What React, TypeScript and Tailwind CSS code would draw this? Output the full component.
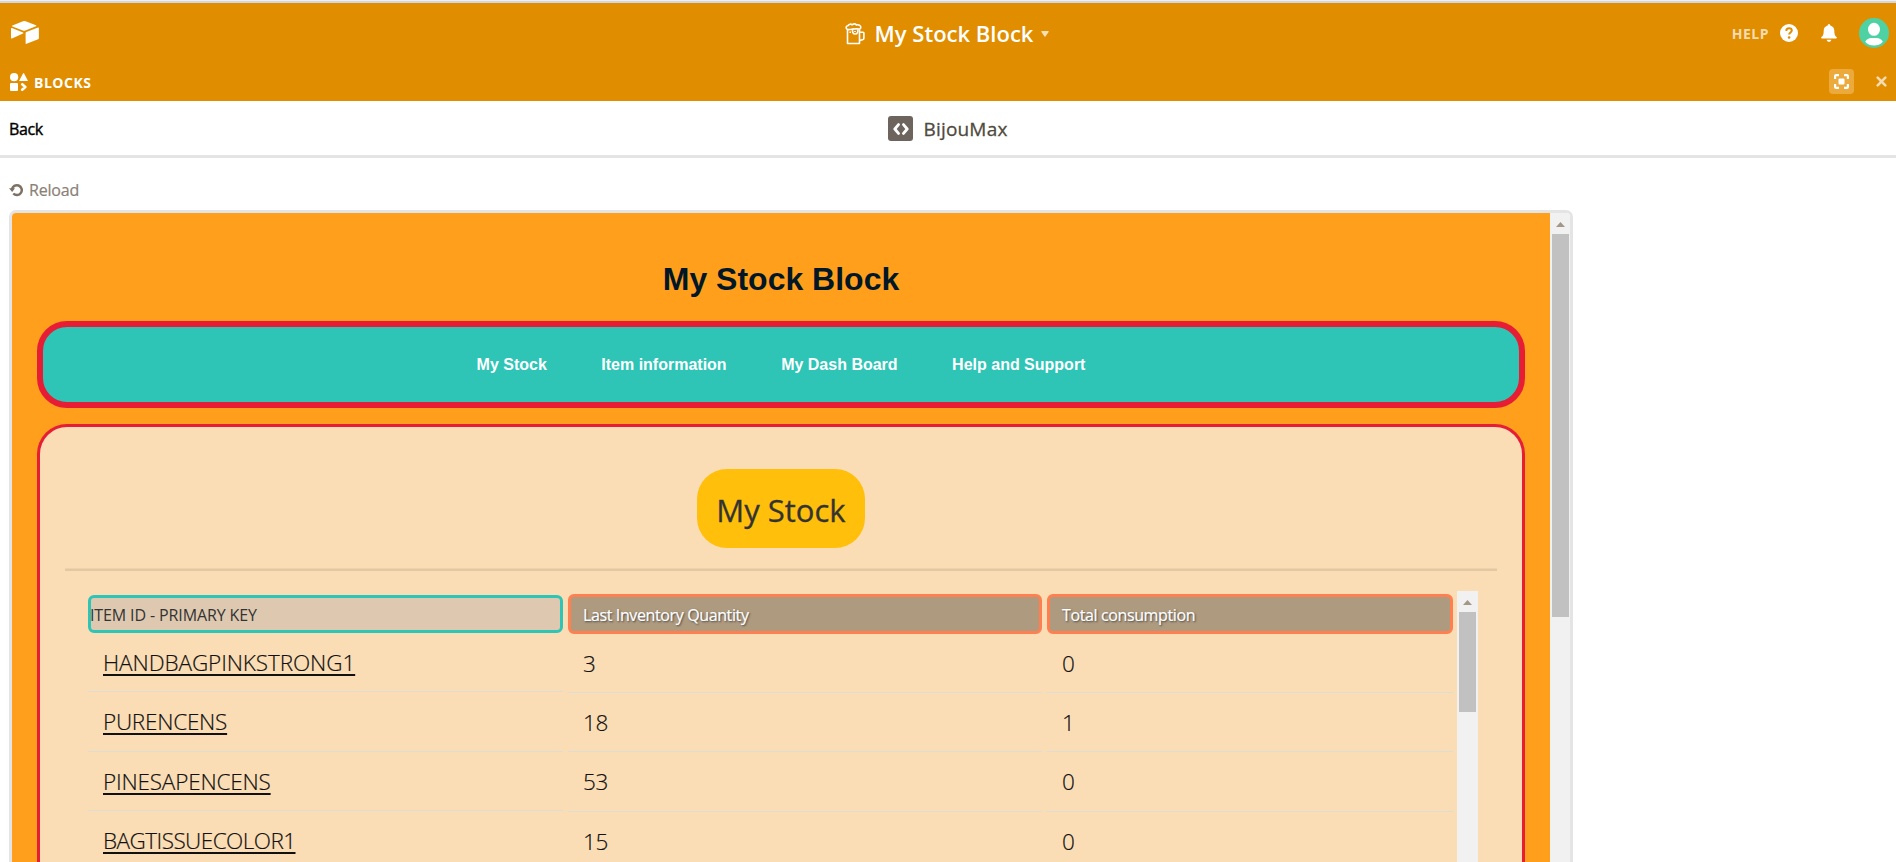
import type { ReactNode } from "react";

const items = [
  { name: "HANDBAGPINKSTRONG1", tracking: "tracking-[-0.09px]" },
  { name: "PURENCENS", tracking: "tracking-[-0.24px]" },
  { name: "PINESAPENCENS", tracking: "tracking-[-0.18px]" },
  { name: "BAGTISSUECOLOR1", tracking: "tracking-[-0.54px]" },
];
const quantities = ["3", "18", "53", "15"];
const consumptions = ["0", "1", "0", "0"];
const links = ["My Stock", "Item information", "My Dash Board", "Help and Support"];

function Logo() {
  return (
    <svg className="h-6 w-[30px]" viewBox="0 0 30 24" fill="#fff">
      <path d="M2.400 5.400 13 1.200q1.300-.5 2.600 0L26 5.300q1 .5 0 1L15.400 10.600q-1.300.5-2.600 0L2.400 6.400q-.9-.5 0-1Z" />
      <path d="M1 8.600q0-1 1-.6l11 4.500q.9.400 0 .9L2 18.400q-1 .4-1-.6Z" />
      <path d="M15.600 13q0-.7.7-1L28 7.500q.9-.3.900.5v10.300q0 .7-.7 1l-11.700 4.500q-.9.300-.9-.5Z" />
    </svg>
  );
}

function BlocksIcon() {
  return (
    <svg className="h-[18px] w-[18px]" viewBox="0 0 18 18" fill="#fff">
      <circle cx="4.1" cy="4.2" r="4.1" />
      <path d="M13.500 0q.4 0 .6.400l3.700 7q.3.700-.4.700H9.700q-.8 0-.4-.7l3.700-7q.2-.4.500-.4Z" />
      <rect x="0" y="10" width="8" height="8" rx="1" />
      <path d="m12.200 11.300 3.100 2.700-3.100 2.700" fill="none" stroke="#fff" strokeWidth="2.600" strokeLinejoin="round" strokeLinecap="round" />
    </svg>
  );
}

function BeerIcon() {
  return (
    <svg className="h-[22px] w-5" viewBox="0 0 20 22" fill="none" stroke="#fff" strokeWidth="1.600" strokeLinejoin="round">
      <path d="M2.500 6.500v14h12v-14" />
      <path d="M2.500 6.500C.6 5.600.6 3 2.800 2.700 4.200.9 6 .8 7.200 1.800 8.600.8 10.400.8 11.400 1.900c2.300-.5 4.400.6 4.400 2.300 0 1.500-1.200 2-2.300 1.700-1.500-.5-2.500.2-4 .1-1.600-.6-4.400 1.300-7 .5Z" />
      <path d="M7.800 6.300c-1 2.300.3 4.700 2.400 4.700s3.200-2.200 2.500-4.800M10 8v1" />
      <path d="M14.800 9.200h3.200q.9 0 .9.900v5.200q0 1.200-1.300 1.500l-2.800.6" />
      <path d="M5.200 8.500v1.500" />
    </svg>
  );
}

function BellIcon() {
  return (
    <svg className="h-[18px] w-4" viewBox="0 0 16 18" fill="#fff">
      <path d="M8 0q1.300 0 1.300 1.500c2.300.6 4 2.400 4 5.200 0 3.400.5 4.800 2.200 6.300.8.800.4 1.600-.5 1.600H1c-.9 0-1.300-.8-.5-1.600 1.700-1.500 2.200-2.900 2.200-6.300 0-2.800 1.700-4.600 4-5.200Q6.700 0 8 0Z" />
      <path d="M5.700 15.800h4.600C10 17.200 9.200 17.800 8 17.800s-2-.6-2.300-2Z" />
    </svg>
  );
}

function Avatar() {
  return (
    <svg className="h-[30px] w-[30px]" viewBox="0 0 30 30">
      <circle cx="15" cy="15" r="15" fill="#4ed2a4" />
      <ellipse cx="15" cy="11.300" rx="6" ry="6.500" fill="#fff" />
      <path d="M6.200 23.800C7.500 21.200 10 20 12 20h6c2 0 4.500 1.200 5.800 3.800C21.500 26.500 18.500 27.600 15 27.600s-6.500-1.100-8.800-3.800Z" fill="#fff" />
    </svg>
  );
}

function FocusIcon() {
  return (
    <svg className="h-[15px] w-[15px]" viewBox="0 0 15 15" fill="none" stroke="#fff" strokeWidth="2.200" strokeLinejoin="round">
      <path d="M1.100 5V2.100q0-1 1-1H5M10 1.100h2.900q1 0 1 1V5M13.900 10v2.900q0 1-1 1H10M5 13.900H2.100q-1 0-1-1V10" />
      <rect x="4.500" y="4.500" width="6" height="6" rx="1" fill="#fff" stroke="none" />
    </svg>
  );
}

function ReloadIcon() {
  return (
    <svg className="h-[14px] w-[14px]" viewBox="0 0 14 14">
      <path d="M3 6.500a4.900 4.900 0 1 1 1.300 4" fill="none" stroke="#7d7163" strokeWidth="2.500" />
      <path d="M0 5.200h6L3.200 9Z" fill="#7d7163" />
    </svg>
  );
}

function UpArrow() {
  return (
    <svg className="h-[5px] w-[9px]" viewBox="0 0 9 5">
      <path d="M4.500 0 9 5H0Z" fill="#a39886" />
    </svg>
  );
}

function Scrollbar({ thumb, width }: { thumb: string; width: string }) {
  return (
    <div className={`${width} flex shrink-0 flex-col items-center self-stretch bg-[#f1f1f1]`}>
      <div className="flex h-[21px] shrink-0 items-center justify-center pt-[2px]">
        <UpArrow />
      </div>
      <div className={`${thumb} w-[17px] shrink-0 bg-[#c1c1c1]`} />
    </div>
  );
}

function Column({ className, title, children }: { className: string; title: string; children: ReactNode }) {
  return (
    <div className={className}>
      <div className="h-10 rounded-md border-3 border-[#ff7f50] bg-[#ae9a7e] pl-3 text-base leading-[37px] font-normal tracking-[-0.38px] text-white [text-shadow:1px_1px_2px_#444]">
        {title}
      </div>
      {children}
    </div>
  );
}

function ValueRows({ values }: { values: string[] }) {
  return (
    <>
      {values.map((v, i) => (
        <div key={i} className="h-[59.200px] border-b border-[#dedcd5] pl-[15px] text-[22.500px] leading-[60px] tracking-[-0.400px]">
          {v}
        </div>
      ))}
    </>
  );
}

export default function App() {
  return (
    <div className="flex h-[862px] w-[1896px] flex-col overflow-hidden bg-white font-['Open_Sans',sans-serif]">
      <div className="h-[3px] shrink-0 border-t border-[#eeeff2] bg-[#d3d6de]" />
      <header className="h-[98px] shrink-0 bg-[#e08d00] text-white">
        <div className="grid h-[60px] grid-cols-3">
          <div className="pt-[17px] pl-[10px]">
            <Logo />
          </div>
          <div className="flex justify-center pr-[2px]">
            <div className="pt-[20px]">
              <BeerIcon />
            </div>
            <div className="ml-[10px] pt-[15px] text-[22px] leading-[31px] font-semibold">My Stock Block</div>
            <svg className="mt-[28px] ml-[8px] h-[6px] w-2" viewBox="0 0 8 6">
              <path d="M.8 0h6.400q.8.200.400 1L4.500 5.500q-.5.500-1 0L.4 1Q0 .2.800 0Z" fill="#f7dfb5" />
            </svg>
          </div>
          <div className="flex justify-end pr-[7px]">
            <div className="mr-[11px] pt-[19px] text-sm leading-[24px] font-bold tracking-[0.500px] text-[#f6dcb0]">HELP</div>
            <svg className="mt-[21px] h-[18px] w-[18px]" viewBox="0 0 18 18">
              <circle cx="9" cy="9" r="9" fill="#fff" />
              <path d="M6.200 6.900C6.300 5.200 7.400 4.200 9 4.200s2.800 1 2.800 2.400c0 1.800-2.700 2-2.700 4" fill="none" stroke="#e08d00" strokeWidth="2" />
              <circle cx="9.100" cy="13.500" r="1.300" fill="#e08d00" />
            </svg>
            <div className="mt-[21px] ml-[23px]">
              <BellIcon />
            </div>
            <div className="mt-[15px] ml-[22px]">
              <Avatar />
            </div>
          </div>
        </div>
        <div className="flex h-[38px] justify-between">
          <div className="flex pl-[10px]">
            <div className="pt-[10px]">
              <BlocksIcon />
            </div>
            <div className="ml-[6px] pt-[8px] text-sm leading-[23px] font-bold tracking-[0.500px]">BLOCKS</div>
          </div>
          <div className="flex pr-[9px]">
            <div className="mt-[6px] flex h-[25px] w-[25px] items-center justify-center rounded bg-[#eca93c]">
              <FocusIcon />
            </div>
            <svg className="mt-[13px] ml-[22px] h-[11px] w-[11px]" viewBox="0 0 11 11">
              <path d="m1.700 1.700 7.600 7.600M9.300 1.700 1.700 9.300" stroke="#f6dcb0" strokeWidth="2.600" strokeLinecap="round" />
            </svg>
          </div>
        </div>
      </header>

      <div className="grid h-[57px] shrink-0 grid-cols-3 border-b-3 border-[#e4e4e4]">
        <div className="pt-[15px] pl-[9px] text-base leading-[26px] tracking-[-0.400px] text-black [-webkit-text-stroke:0.4px_#000]">Back</div>
        <div className="flex justify-center">
          <div className="mt-[15px] flex h-[25px] w-[25px] items-center justify-center rounded-[3px] bg-[#6d645d]">
            <svg className="h-3 w-4" viewBox="0 0 16 12" fill="none" stroke="#fff" strokeWidth="2.800" strokeLinecap="round" strokeLinejoin="round">
              <path d="M5.500 1.600 1.800 6l3.700 4.400M10.500 1.600 14.200 6l-3.700 4.400" />
            </svg>
          </div>
          <div className="ml-[10px] pt-[14px] text-[19px] leading-[29px] tracking-[0.200px] text-[#4f4a40] [-webkit-text-stroke:0.3px_#4f4a40]">BijouMax</div>
        </div>
      </div>

      <div className="flex h-[52px] shrink-0 pl-[9px]">
        <div className="pt-[25px]">
          <ReloadIcon />
        </div>
        <div className="ml-[6px] pt-[19px] text-base leading-[26px] tracking-[-0.200px] text-[#8b8074] [-webkit-text-stroke:0.2px_#8b8074]">Reload</div>
      </div>

      <div className="ml-[9px] flex h-[652px] w-[1564px] shrink-0 overflow-hidden rounded-t-[7px] border-3 border-b-0 border-[#e4e4e4]">
        <div className="flex min-w-0 flex-1 flex-col bg-[#ff9f1c] pr-[25px] pl-[25px]">
          <h1 className="h-[108px] shrink-0 pt-[48px] text-center font-['Liberation_Sans',sans-serif] text-[32px] leading-[36px] font-bold text-[#011627]">
            My Stock Block
          </h1>
          <nav className="flex h-[87px] shrink-0 items-center justify-center gap-[54.500px] rounded-[30px] border-6 border-[#e71d36] bg-[#2ec4b6] pt-px font-['Liberation_Sans',sans-serif] text-base leading-[20px] font-bold text-white">
            {links.map((l) => (
              <span key={l}>{l}</span>
            ))}
          </nav>
          <section className="mt-4 flex h-[460px] shrink-0 flex-col rounded-t-[30px] border-3 border-b-0 border-[#e71d36] bg-[#fbddb5] px-[25px] pt-[42px]">
            <div className="h-[79px] w-[168px] shrink-0 self-center rounded-[30px] bg-[#ffbf0a] pt-[21px] text-center text-[31px] leading-[41px] text-[#333] [-webkit-text-stroke:0.3px_#333]">
              My Stock
            </div>
            <div className="mt-5 h-[3px] shrink-0 border-t border-[#efd1ab] bg-[#e2c7a3]" />
            <div className="mt-5 ml-[23px] flex w-[1390px] flex-1 overflow-hidden font-light text-[#111] [-webkit-text-stroke:0.2px]">
              <div className="w-[475px] pt-1">
                <div className="h-[38px] rounded-md border-3 border-[#2ec4b6] bg-[#dec9b0] text-base leading-[34px] font-normal tracking-[-0.120px] text-[#333] [-webkit-text-stroke:0px]">
                  <span className="-ml-px">ITEM ID - PRIMARY KEY</span>
                </div>
                {items.map((item) => (
                  <div key={item.name} className="h-[59.300px] border-b border-[#dedcd5] pl-[15px]">
                    <div className="h-[43px] text-[22.500px] leading-[59px]">
                      <span className={`${item.tracking} underline decoration-[#111] decoration-2 underline-offset-[3px]`}>{item.name}</span>
                    </div>
                  </div>
                ))}
              </div>
              <Column className="ml-[5px] w-[474px] pt-[3px]" title="Last Inventory Quantity">
                <ValueRows values={quantities} />
              </Column>
              <Column className="ml-[5px] w-[406px] pt-[3px]" title="Total consumption">
                <ValueRows values={consumptions} />
              </Column>
              <div className="ml-1 flex">
                <Scrollbar thumb="h-[100px]" width="w-[21px]" />
              </div>
            </div>
          </section>
        </div>
        <Scrollbar thumb="h-[383px]" width="w-5" />
      </div>
    </div>
  );
}
